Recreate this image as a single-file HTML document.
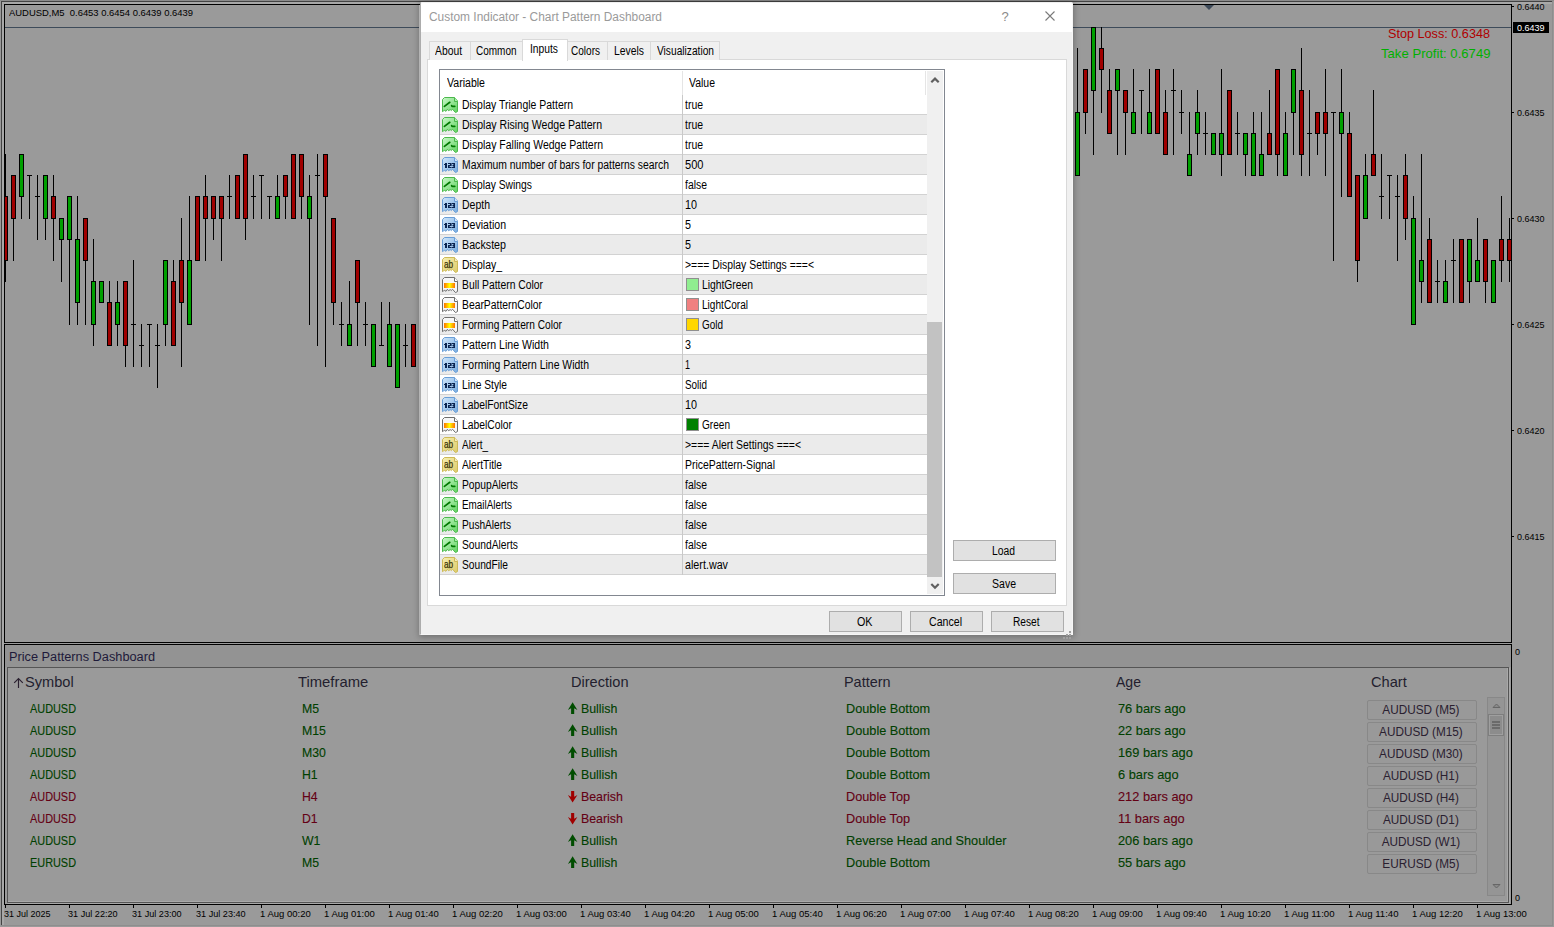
<!DOCTYPE html>
<html><head><meta charset="utf-8">
<style>
*{margin:0;padding:0;box-sizing:border-box}
html,body{width:1554px;height:927px;overflow:hidden;background:#9a9a9a;font-family:"Liberation Sans",sans-serif;position:relative}
.a{position:absolute}
.t{position:absolute;white-space:nowrap;transform-origin:0 0}
</style></head><body>
<svg width="0" height="0" style="position:absolute"><defs>
<linearGradient id="gg" x1="0" y1="0" x2="1" y2="1"><stop offset="0" stop-color="#c9f7c9"/><stop offset="1" stop-color="#5fd35f"/></linearGradient>
<linearGradient id="gb" x1="0" y1="0" x2="1" y2="1"><stop offset="0" stop-color="#cfe6fb"/><stop offset="1" stop-color="#78ace0"/></linearGradient>
<linearGradient id="gy" x1="0" y1="0" x2="1" y2="1"><stop offset="0" stop-color="#f7efb0"/><stop offset="1" stop-color="#dccb6a"/></linearGradient>
<linearGradient id="gc" x1="0" y1="0" x2="1" y2="0"><stop offset="0" stop-color="#ff7000"/><stop offset=".5" stop-color="#ffff00"/><stop offset="1" stop-color="#ff7000"/></linearGradient>
</defs></svg>
<!-- frame -->
<div class="a" style="left:0;top:0;width:1554px;height:1px;background:#8c8c8c"></div>
<div class="a" style="left:1px;top:1px;width:1551px;height:1px;background:#444"></div>
<div class="a" style="left:1px;top:1px;width:1px;height:924px;background:#444"></div>
<div class="a" style="left:2px;top:2px;width:1550px;height:2px;background:#a8a8a8"></div>
<div class="a" style="left:2px;top:2px;width:2px;height:923px;background:#a8a8a8"></div>
<div class="a" style="left:1552px;top:1px;width:1px;height:925px;background:#8e8e8e"></div>
<div class="a" style="left:1px;top:925px;width:1552px;height:1px;background:#8e8e8e"></div>
<!-- chart borders -->
<div class="a" style="left:4px;top:4px;width:1508px;height:639px;border:1px solid #000"></div>
<div class="a" style="left:4px;top:644px;width:1508px;height:261px;border:1px solid #000"></div>
<div class="a" style="left:5px;top:27px;width:1506px;height:1px;background:#3e4b5a"></div>
<svg class="a" style="left:1200px;top:4px" width="20" height="8" viewBox="0 0 20 8"><path d="M4,1 L14,1 L9,6 Z" fill="#3e4b5a"/></svg>
<div class="t" style="left:9px;top:6px;font-size:9.5px;line-height:13.5px;color:#000;transform:scaleX(0.9925);white-space:pre;">AUDUSD,M5  0.6453 0.6454 0.6439 0.6439</div>
<svg class="a" style="left:0;top:0" width="1554" height="927" viewBox="0 0 1554 927">
<defs><clipPath id="cc"><rect x="5" y="5" width="1506" height="637"/></clipPath></defs>
<g clip-path="url(#cc)">
<rect x="5" y="154" width="1" height="128" fill="#000"/>
<rect x="3" y="196" width="5" height="65" fill="#000"/>
<rect x="4" y="197" width="3" height="63" fill="#a00000"/>
<rect x="13" y="175" width="1" height="86" fill="#000"/>
<rect x="11" y="175" width="5" height="44" fill="#000"/>
<rect x="12" y="176" width="3" height="42" fill="#a00000"/>
<rect x="21" y="154" width="1" height="65" fill="#000"/>
<rect x="19" y="154" width="5" height="43" fill="#000"/>
<rect x="20" y="155" width="3" height="41" fill="#00a000"/>
<rect x="29" y="175" width="1" height="44" fill="#000"/>
<rect x="27" y="175" width="5" height="1" fill="#000"/>
<rect x="37" y="175" width="1" height="65" fill="#000"/>
<rect x="35" y="196" width="5" height="1" fill="#000"/>
<rect x="45" y="175" width="1" height="65" fill="#000"/>
<rect x="43" y="175" width="5" height="44" fill="#000"/>
<rect x="44" y="176" width="3" height="42" fill="#00a000"/>
<rect x="53" y="175" width="1" height="86" fill="#000"/>
<rect x="51" y="196" width="5" height="23" fill="#000"/>
<rect x="52" y="197" width="3" height="21" fill="#a00000"/>
<rect x="61" y="218" width="1" height="64" fill="#000"/>
<rect x="59" y="218" width="5" height="22" fill="#000"/>
<rect x="60" y="219" width="3" height="20" fill="#00a000"/>
<rect x="69" y="196" width="1" height="129" fill="#000"/>
<rect x="67" y="196" width="5" height="44" fill="#000"/>
<rect x="68" y="197" width="3" height="42" fill="#00a000"/>
<rect x="77" y="196" width="1" height="129" fill="#000"/>
<rect x="75" y="239" width="5" height="64" fill="#000"/>
<rect x="76" y="240" width="3" height="62" fill="#00a000"/>
<rect x="85" y="218" width="1" height="107" fill="#000"/>
<rect x="83" y="218" width="5" height="43" fill="#000"/>
<rect x="84" y="219" width="3" height="41" fill="#a00000"/>
<rect x="93" y="239" width="1" height="107" fill="#000"/>
<rect x="91" y="281" width="5" height="44" fill="#000"/>
<rect x="92" y="282" width="3" height="42" fill="#00a000"/>
<rect x="101" y="281" width="1" height="22" fill="#000"/>
<rect x="99" y="281" width="5" height="22" fill="#000"/>
<rect x="100" y="282" width="3" height="20" fill="#00a000"/>
<rect x="109" y="281" width="1" height="65" fill="#000"/>
<rect x="107" y="302" width="5" height="44" fill="#000"/>
<rect x="108" y="303" width="3" height="42" fill="#a00000"/>
<rect x="117" y="281" width="1" height="65" fill="#000"/>
<rect x="115" y="302" width="5" height="23" fill="#000"/>
<rect x="116" y="303" width="3" height="21" fill="#00a000"/>
<rect x="125" y="281" width="1" height="86" fill="#000"/>
<rect x="123" y="281" width="5" height="65" fill="#000"/>
<rect x="124" y="282" width="3" height="63" fill="#a00000"/>
<rect x="133" y="260" width="1" height="107" fill="#000"/>
<rect x="131" y="324" width="5" height="1" fill="#000"/>
<rect x="141" y="324" width="1" height="43" fill="#000"/>
<rect x="139" y="345" width="5" height="1" fill="#000"/>
<rect x="149" y="324" width="1" height="43" fill="#000"/>
<rect x="147" y="324" width="5" height="1" fill="#000"/>
<rect x="157" y="324" width="1" height="64" fill="#000"/>
<rect x="155" y="345" width="5" height="1" fill="#000"/>
<rect x="165" y="260" width="1" height="86" fill="#000"/>
<rect x="163" y="260" width="5" height="65" fill="#000"/>
<rect x="164" y="261" width="3" height="63" fill="#00a000"/>
<rect x="173" y="260" width="1" height="86" fill="#000"/>
<rect x="171" y="281" width="5" height="65" fill="#000"/>
<rect x="172" y="282" width="3" height="63" fill="#a00000"/>
<rect x="181" y="218" width="1" height="149" fill="#000"/>
<rect x="179" y="260" width="5" height="43" fill="#000"/>
<rect x="180" y="261" width="3" height="41" fill="#a00000"/>
<rect x="189" y="196" width="1" height="129" fill="#000"/>
<rect x="187" y="260" width="5" height="65" fill="#000"/>
<rect x="188" y="261" width="3" height="63" fill="#00a000"/>
<rect x="197" y="196" width="1" height="65" fill="#000"/>
<rect x="195" y="196" width="5" height="65" fill="#000"/>
<rect x="196" y="197" width="3" height="63" fill="#a00000"/>
<rect x="205" y="175" width="1" height="86" fill="#000"/>
<rect x="203" y="196" width="5" height="23" fill="#000"/>
<rect x="204" y="197" width="3" height="21" fill="#a00000"/>
<rect x="213" y="196" width="1" height="44" fill="#000"/>
<rect x="211" y="196" width="5" height="23" fill="#000"/>
<rect x="212" y="197" width="3" height="21" fill="#a00000"/>
<rect x="221" y="196" width="1" height="65" fill="#000"/>
<rect x="219" y="196" width="5" height="23" fill="#000"/>
<rect x="220" y="197" width="3" height="21" fill="#a00000"/>
<rect x="229" y="175" width="1" height="44" fill="#000"/>
<rect x="227" y="196" width="5" height="1" fill="#000"/>
<rect x="237" y="175" width="1" height="44" fill="#000"/>
<rect x="235" y="175" width="5" height="44" fill="#000"/>
<rect x="236" y="176" width="3" height="42" fill="#a00000"/>
<rect x="245" y="154" width="1" height="86" fill="#000"/>
<rect x="243" y="154" width="5" height="65" fill="#000"/>
<rect x="244" y="155" width="3" height="63" fill="#a00000"/>
<rect x="253" y="175" width="1" height="44" fill="#000"/>
<rect x="251" y="196" width="5" height="1" fill="#000"/>
<rect x="261" y="175" width="1" height="44" fill="#000"/>
<rect x="259" y="175" width="5" height="1" fill="#000"/>
<rect x="269" y="196" width="1" height="23" fill="#000"/>
<rect x="267" y="196" width="5" height="1" fill="#000"/>
<rect x="277" y="175" width="1" height="44" fill="#000"/>
<rect x="275" y="196" width="5" height="23" fill="#000"/>
<rect x="276" y="197" width="3" height="21" fill="#00a000"/>
<rect x="285" y="175" width="1" height="44" fill="#000"/>
<rect x="283" y="175" width="5" height="22" fill="#000"/>
<rect x="284" y="176" width="3" height="20" fill="#a00000"/>
<rect x="293" y="154" width="1" height="65" fill="#000"/>
<rect x="291" y="154" width="5" height="65" fill="#000"/>
<rect x="292" y="155" width="3" height="63" fill="#a00000"/>
<rect x="301" y="154" width="1" height="65" fill="#000"/>
<rect x="299" y="154" width="5" height="43" fill="#000"/>
<rect x="300" y="155" width="3" height="41" fill="#a00000"/>
<rect x="309" y="175" width="1" height="150" fill="#000"/>
<rect x="307" y="196" width="5" height="23" fill="#000"/>
<rect x="308" y="197" width="3" height="21" fill="#00a000"/>
<rect x="317" y="154" width="1" height="192" fill="#000"/>
<rect x="315" y="175" width="5" height="1" fill="#000"/>
<rect x="325" y="154" width="1" height="213" fill="#000"/>
<rect x="323" y="154" width="5" height="43" fill="#000"/>
<rect x="324" y="155" width="3" height="41" fill="#a00000"/>
<rect x="333" y="218" width="1" height="107" fill="#000"/>
<rect x="331" y="218" width="5" height="85" fill="#000"/>
<rect x="332" y="219" width="3" height="83" fill="#a00000"/>
<rect x="341" y="302" width="1" height="44" fill="#000"/>
<rect x="339" y="324" width="5" height="1" fill="#000"/>
<rect x="349" y="281" width="1" height="65" fill="#000"/>
<rect x="347" y="324" width="5" height="22" fill="#000"/>
<rect x="348" y="325" width="3" height="20" fill="#00a000"/>
<rect x="357" y="260" width="1" height="86" fill="#000"/>
<rect x="355" y="260" width="5" height="43" fill="#000"/>
<rect x="356" y="261" width="3" height="41" fill="#a00000"/>
<rect x="365" y="302" width="1" height="44" fill="#000"/>
<rect x="363" y="324" width="5" height="1" fill="#000"/>
<rect x="373" y="324" width="1" height="43" fill="#000"/>
<rect x="371" y="324" width="5" height="43" fill="#000"/>
<rect x="372" y="325" width="3" height="41" fill="#00a000"/>
<rect x="381" y="302" width="1" height="44" fill="#000"/>
<rect x="379" y="345" width="5" height="1" fill="#000"/>
<rect x="389" y="302" width="1" height="65" fill="#000"/>
<rect x="387" y="324" width="5" height="43" fill="#000"/>
<rect x="388" y="325" width="3" height="41" fill="#00a000"/>
<rect x="397" y="324" width="1" height="64" fill="#000"/>
<rect x="395" y="324" width="5" height="64" fill="#000"/>
<rect x="396" y="325" width="3" height="62" fill="#00a000"/>
<rect x="405" y="324" width="1" height="43" fill="#000"/>
<rect x="403" y="345" width="5" height="1" fill="#000"/>
<rect x="413" y="324" width="1" height="43" fill="#000"/>
<rect x="411" y="324" width="5" height="43" fill="#000"/>
<rect x="412" y="325" width="3" height="41" fill="#a00000"/>
<rect x="421" y="324" width="1" height="43" fill="#000"/>
<rect x="419" y="345" width="5" height="1" fill="#000"/>
<rect x="1077" y="48" width="1" height="128" fill="#000"/>
<rect x="1075" y="112" width="5" height="64" fill="#000"/>
<rect x="1076" y="113" width="3" height="62" fill="#00a000"/>
<rect x="1085" y="69" width="1" height="65" fill="#000"/>
<rect x="1083" y="69" width="5" height="44" fill="#000"/>
<rect x="1084" y="70" width="3" height="42" fill="#a00000"/>
<rect x="1093" y="27" width="1" height="128" fill="#000"/>
<rect x="1091" y="27" width="5" height="64" fill="#000"/>
<rect x="1092" y="28" width="3" height="62" fill="#00a000"/>
<rect x="1101" y="27" width="1" height="86" fill="#000"/>
<rect x="1099" y="48" width="5" height="22" fill="#000"/>
<rect x="1100" y="49" width="3" height="20" fill="#a00000"/>
<rect x="1109" y="69" width="1" height="65" fill="#000"/>
<rect x="1107" y="90" width="5" height="44" fill="#000"/>
<rect x="1108" y="91" width="3" height="42" fill="#a00000"/>
<rect x="1117" y="69" width="1" height="86" fill="#000"/>
<rect x="1115" y="69" width="5" height="22" fill="#000"/>
<rect x="1116" y="70" width="3" height="20" fill="#00a000"/>
<rect x="1125" y="90" width="1" height="65" fill="#000"/>
<rect x="1123" y="90" width="5" height="23" fill="#000"/>
<rect x="1124" y="91" width="3" height="21" fill="#a00000"/>
<rect x="1133" y="69" width="1" height="65" fill="#000"/>
<rect x="1131" y="112" width="5" height="22" fill="#000"/>
<rect x="1132" y="113" width="3" height="20" fill="#00a000"/>
<rect x="1141" y="90" width="1" height="44" fill="#000"/>
<rect x="1139" y="90" width="5" height="1" fill="#000"/>
<rect x="1149" y="69" width="1" height="65" fill="#000"/>
<rect x="1147" y="112" width="5" height="22" fill="#000"/>
<rect x="1148" y="113" width="3" height="20" fill="#00a000"/>
<rect x="1157" y="69" width="1" height="65" fill="#000"/>
<rect x="1155" y="69" width="5" height="65" fill="#000"/>
<rect x="1156" y="70" width="3" height="63" fill="#a00000"/>
<rect x="1165" y="90" width="1" height="65" fill="#000"/>
<rect x="1163" y="112" width="5" height="43" fill="#000"/>
<rect x="1164" y="113" width="3" height="41" fill="#a00000"/>
<rect x="1173" y="69" width="1" height="86" fill="#000"/>
<rect x="1171" y="90" width="5" height="1" fill="#000"/>
<rect x="1181" y="90" width="1" height="44" fill="#000"/>
<rect x="1179" y="112" width="5" height="1" fill="#000"/>
<rect x="1189" y="112" width="1" height="64" fill="#000"/>
<rect x="1187" y="154" width="5" height="22" fill="#000"/>
<rect x="1188" y="155" width="3" height="20" fill="#00a000"/>
<rect x="1197" y="90" width="1" height="65" fill="#000"/>
<rect x="1195" y="112" width="5" height="22" fill="#000"/>
<rect x="1196" y="113" width="3" height="20" fill="#00a000"/>
<rect x="1205" y="112" width="1" height="43" fill="#000"/>
<rect x="1203" y="133" width="5" height="1" fill="#000"/>
<rect x="1213" y="133" width="1" height="22" fill="#000"/>
<rect x="1211" y="133" width="5" height="22" fill="#000"/>
<rect x="1212" y="134" width="3" height="20" fill="#00a000"/>
<rect x="1221" y="69" width="1" height="107" fill="#000"/>
<rect x="1219" y="133" width="5" height="22" fill="#000"/>
<rect x="1220" y="134" width="3" height="20" fill="#00a000"/>
<rect x="1229" y="90" width="1" height="65" fill="#000"/>
<rect x="1227" y="90" width="5" height="65" fill="#000"/>
<rect x="1228" y="91" width="3" height="63" fill="#a00000"/>
<rect x="1237" y="112" width="1" height="43" fill="#000"/>
<rect x="1235" y="133" width="5" height="1" fill="#000"/>
<rect x="1245" y="133" width="1" height="43" fill="#000"/>
<rect x="1243" y="133" width="5" height="22" fill="#000"/>
<rect x="1244" y="134" width="3" height="20" fill="#00a000"/>
<rect x="1253" y="112" width="1" height="64" fill="#000"/>
<rect x="1251" y="133" width="5" height="43" fill="#000"/>
<rect x="1252" y="134" width="3" height="41" fill="#00a000"/>
<rect x="1261" y="112" width="1" height="64" fill="#000"/>
<rect x="1259" y="154" width="5" height="22" fill="#000"/>
<rect x="1260" y="155" width="3" height="20" fill="#00a000"/>
<rect x="1269" y="90" width="1" height="65" fill="#000"/>
<rect x="1267" y="133" width="5" height="22" fill="#000"/>
<rect x="1268" y="134" width="3" height="20" fill="#a00000"/>
<rect x="1277" y="69" width="1" height="107" fill="#000"/>
<rect x="1275" y="69" width="5" height="86" fill="#000"/>
<rect x="1276" y="70" width="3" height="84" fill="#a00000"/>
<rect x="1285" y="112" width="1" height="64" fill="#000"/>
<rect x="1283" y="133" width="5" height="43" fill="#000"/>
<rect x="1284" y="134" width="3" height="41" fill="#00a000"/>
<rect x="1293" y="69" width="1" height="86" fill="#000"/>
<rect x="1291" y="69" width="5" height="44" fill="#000"/>
<rect x="1292" y="70" width="3" height="42" fill="#00a000"/>
<rect x="1301" y="48" width="1" height="128" fill="#000"/>
<rect x="1299" y="90" width="5" height="65" fill="#000"/>
<rect x="1300" y="91" width="3" height="63" fill="#a00000"/>
<rect x="1309" y="90" width="1" height="86" fill="#000"/>
<rect x="1307" y="133" width="5" height="1" fill="#000"/>
<rect x="1317" y="112" width="1" height="43" fill="#000"/>
<rect x="1315" y="112" width="5" height="22" fill="#000"/>
<rect x="1316" y="113" width="3" height="20" fill="#a00000"/>
<rect x="1325" y="69" width="1" height="107" fill="#000"/>
<rect x="1323" y="112" width="5" height="22" fill="#000"/>
<rect x="1324" y="113" width="3" height="20" fill="#a00000"/>
<rect x="1333" y="112" width="1" height="149" fill="#000"/>
<rect x="1331" y="112" width="5" height="1" fill="#000"/>
<rect x="1341" y="69" width="1" height="128" fill="#000"/>
<rect x="1339" y="112" width="5" height="22" fill="#000"/>
<rect x="1340" y="113" width="3" height="20" fill="#00a000"/>
<rect x="1349" y="112" width="1" height="85" fill="#000"/>
<rect x="1347" y="133" width="5" height="64" fill="#000"/>
<rect x="1348" y="134" width="3" height="62" fill="#a00000"/>
<rect x="1357" y="175" width="1" height="107" fill="#000"/>
<rect x="1355" y="175" width="5" height="86" fill="#000"/>
<rect x="1356" y="176" width="3" height="84" fill="#a00000"/>
<rect x="1365" y="154" width="1" height="65" fill="#000"/>
<rect x="1363" y="175" width="5" height="44" fill="#000"/>
<rect x="1364" y="176" width="3" height="42" fill="#00a000"/>
<rect x="1373" y="90" width="1" height="86" fill="#000"/>
<rect x="1371" y="154" width="5" height="22" fill="#000"/>
<rect x="1372" y="155" width="3" height="20" fill="#a00000"/>
<rect x="1381" y="154" width="1" height="65" fill="#000"/>
<rect x="1379" y="196" width="5" height="1" fill="#000"/>
<rect x="1389" y="175" width="1" height="44" fill="#000"/>
<rect x="1387" y="175" width="5" height="1" fill="#000"/>
<rect x="1397" y="175" width="1" height="86" fill="#000"/>
<rect x="1395" y="196" width="5" height="1" fill="#000"/>
<rect x="1405" y="154" width="1" height="86" fill="#000"/>
<rect x="1403" y="175" width="5" height="44" fill="#000"/>
<rect x="1404" y="176" width="3" height="42" fill="#a00000"/>
<rect x="1413" y="196" width="1" height="129" fill="#000"/>
<rect x="1411" y="218" width="5" height="107" fill="#000"/>
<rect x="1412" y="219" width="3" height="105" fill="#00a000"/>
<rect x="1421" y="154" width="1" height="149" fill="#000"/>
<rect x="1419" y="260" width="5" height="22" fill="#000"/>
<rect x="1420" y="261" width="3" height="20" fill="#00a000"/>
<rect x="1429" y="218" width="1" height="85" fill="#000"/>
<rect x="1427" y="239" width="5" height="64" fill="#000"/>
<rect x="1428" y="240" width="3" height="62" fill="#a00000"/>
<rect x="1437" y="260" width="1" height="43" fill="#000"/>
<rect x="1435" y="281" width="5" height="1" fill="#000"/>
<rect x="1445" y="260" width="1" height="43" fill="#000"/>
<rect x="1443" y="281" width="5" height="22" fill="#000"/>
<rect x="1444" y="282" width="3" height="20" fill="#00a000"/>
<rect x="1453" y="239" width="1" height="64" fill="#000"/>
<rect x="1451" y="260" width="5" height="1" fill="#000"/>
<rect x="1461" y="239" width="1" height="64" fill="#000"/>
<rect x="1459" y="239" width="5" height="64" fill="#000"/>
<rect x="1460" y="240" width="3" height="62" fill="#a00000"/>
<rect x="1469" y="239" width="1" height="64" fill="#000"/>
<rect x="1467" y="239" width="5" height="43" fill="#000"/>
<rect x="1468" y="240" width="3" height="41" fill="#00a000"/>
<rect x="1477" y="218" width="1" height="64" fill="#000"/>
<rect x="1475" y="260" width="5" height="22" fill="#000"/>
<rect x="1476" y="261" width="3" height="20" fill="#00a000"/>
<rect x="1485" y="239" width="1" height="64" fill="#000"/>
<rect x="1483" y="239" width="5" height="43" fill="#000"/>
<rect x="1484" y="240" width="3" height="41" fill="#a00000"/>
<rect x="1493" y="260" width="1" height="43" fill="#000"/>
<rect x="1491" y="260" width="5" height="43" fill="#000"/>
<rect x="1492" y="261" width="3" height="41" fill="#00a000"/>
<rect x="1501" y="196" width="1" height="86" fill="#000"/>
<rect x="1499" y="239" width="5" height="22" fill="#000"/>
<rect x="1500" y="240" width="3" height="20" fill="#a00000"/>
<rect x="1509" y="218" width="1" height="64" fill="#000"/>
<rect x="1507" y="239" width="5" height="22" fill="#000"/>
<rect x="1508" y="240" width="3" height="20" fill="#a00000"/>
</g>
</svg>
<div class="a" style="left:1512px;top:6px;width:2px;height:1px;background:#000"></div><div class="t" style="left:1517px;top:0px;font-size:9.5px;line-height:13.5px;color:#000;transform:scaleX(0.9462);">0.6440</div><div class="a" style="left:1512px;top:112px;width:2px;height:1px;background:#000"></div><div class="t" style="left:1517px;top:106px;font-size:9.5px;line-height:13.5px;color:#000;transform:scaleX(0.9462);">0.6435</div><div class="a" style="left:1512px;top:218px;width:2px;height:1px;background:#000"></div><div class="t" style="left:1517px;top:212px;font-size:9.5px;line-height:13.5px;color:#000;transform:scaleX(0.9462);">0.6430</div><div class="a" style="left:1512px;top:324px;width:2px;height:1px;background:#000"></div><div class="t" style="left:1517px;top:318px;font-size:9.5px;line-height:13.5px;color:#000;transform:scaleX(0.9462);">0.6425</div><div class="a" style="left:1512px;top:430px;width:2px;height:1px;background:#000"></div><div class="t" style="left:1517px;top:424px;font-size:9.5px;line-height:13.5px;color:#000;transform:scaleX(0.9462);">0.6420</div><div class="a" style="left:1512px;top:536px;width:2px;height:1px;background:#000"></div><div class="t" style="left:1517px;top:530px;font-size:9.5px;line-height:13.5px;color:#000;transform:scaleX(0.9462);">0.6415</div>
<div class="a" style="left:1513px;top:22px;width:36px;height:11px;background:#000"></div>
<div class="t" style="left:1517px;top:21px;font-size:9.5px;line-height:13.5px;color:#fff;transform:scaleX(0.9462);">0.6439</div>
<div class="t" style="left:1388px;top:25px;font-size:13px;line-height:17px;color:#b00000;transform:scaleX(0.9732);">Stop Loss: 0.6348</div>
<div class="t" style="left:1381px;top:45px;font-size:13px;line-height:17px;color:#00b000;transform:scaleX(1.0101);">Take Profit: 0.6749</div>
<div class="t" style="left:1515px;top:646px;font-size:9px;line-height:13px;color:#000;">0</div>
<div class="t" style="left:1515px;top:892px;font-size:9px;line-height:13px;color:#000;">0</div>
<div class="a" style="left:5px;top:905px;width:1px;height:3px;background:#000"></div><div class="t" style="left:4px;top:907px;font-size:9.5px;line-height:13.5px;color:#000;transform:scaleX(0.9445);">31 Jul 2025</div><div class="a" style="left:69px;top:905px;width:1px;height:3px;background:#000"></div><div class="t" style="left:68px;top:907px;font-size:9.5px;line-height:13.5px;color:#000;transform:scaleX(0.9582);">31 Jul 22:20</div><div class="a" style="left:133px;top:905px;width:1px;height:3px;background:#000"></div><div class="t" style="left:132px;top:907px;font-size:9.5px;line-height:13.5px;color:#000;transform:scaleX(0.9582);">31 Jul 23:00</div><div class="a" style="left:197px;top:905px;width:1px;height:3px;background:#000"></div><div class="t" style="left:196px;top:907px;font-size:9.5px;line-height:13.5px;color:#000;transform:scaleX(0.9582);">31 Jul 23:40</div><div class="a" style="left:261px;top:905px;width:1px;height:3px;background:#000"></div><div class="t" style="left:260px;top:907px;font-size:9.5px;line-height:13.5px;color:#000;">1 Aug 00:20</div><div class="a" style="left:325px;top:905px;width:1px;height:3px;background:#000"></div><div class="t" style="left:324px;top:907px;font-size:9.5px;line-height:13.5px;color:#000;">1 Aug 01:00</div><div class="a" style="left:389px;top:905px;width:1px;height:3px;background:#000"></div><div class="t" style="left:388px;top:907px;font-size:9.5px;line-height:13.5px;color:#000;">1 Aug 01:40</div><div class="a" style="left:453px;top:905px;width:1px;height:3px;background:#000"></div><div class="t" style="left:452px;top:907px;font-size:9.5px;line-height:13.5px;color:#000;">1 Aug 02:20</div><div class="a" style="left:517px;top:905px;width:1px;height:3px;background:#000"></div><div class="t" style="left:516px;top:907px;font-size:9.5px;line-height:13.5px;color:#000;">1 Aug 03:00</div><div class="a" style="left:581px;top:905px;width:1px;height:3px;background:#000"></div><div class="t" style="left:580px;top:907px;font-size:9.5px;line-height:13.5px;color:#000;">1 Aug 03:40</div><div class="a" style="left:645px;top:905px;width:1px;height:3px;background:#000"></div><div class="t" style="left:644px;top:907px;font-size:9.5px;line-height:13.5px;color:#000;">1 Aug 04:20</div><div class="a" style="left:709px;top:905px;width:1px;height:3px;background:#000"></div><div class="t" style="left:708px;top:907px;font-size:9.5px;line-height:13.5px;color:#000;">1 Aug 05:00</div><div class="a" style="left:773px;top:905px;width:1px;height:3px;background:#000"></div><div class="t" style="left:772px;top:907px;font-size:9.5px;line-height:13.5px;color:#000;">1 Aug 05:40</div><div class="a" style="left:837px;top:905px;width:1px;height:3px;background:#000"></div><div class="t" style="left:836px;top:907px;font-size:9.5px;line-height:13.5px;color:#000;">1 Aug 06:20</div><div class="a" style="left:901px;top:905px;width:1px;height:3px;background:#000"></div><div class="t" style="left:900px;top:907px;font-size:9.5px;line-height:13.5px;color:#000;">1 Aug 07:00</div><div class="a" style="left:965px;top:905px;width:1px;height:3px;background:#000"></div><div class="t" style="left:964px;top:907px;font-size:9.5px;line-height:13.5px;color:#000;">1 Aug 07:40</div><div class="a" style="left:1029px;top:905px;width:1px;height:3px;background:#000"></div><div class="t" style="left:1028px;top:907px;font-size:9.5px;line-height:13.5px;color:#000;">1 Aug 08:20</div><div class="a" style="left:1093px;top:905px;width:1px;height:3px;background:#000"></div><div class="t" style="left:1092px;top:907px;font-size:9.5px;line-height:13.5px;color:#000;">1 Aug 09:00</div><div class="a" style="left:1157px;top:905px;width:1px;height:3px;background:#000"></div><div class="t" style="left:1156px;top:907px;font-size:9.5px;line-height:13.5px;color:#000;">1 Aug 09:40</div><div class="a" style="left:1221px;top:905px;width:1px;height:3px;background:#000"></div><div class="t" style="left:1220px;top:907px;font-size:9.5px;line-height:13.5px;color:#000;">1 Aug 10:20</div><div class="a" style="left:1285px;top:905px;width:1px;height:3px;background:#000"></div><div class="t" style="left:1284px;top:907px;font-size:9.5px;line-height:13.5px;color:#000;transform:scaleX(1.0097);">1 Aug 11:00</div><div class="a" style="left:1349px;top:905px;width:1px;height:3px;background:#000"></div><div class="t" style="left:1348px;top:907px;font-size:9.5px;line-height:13.5px;color:#000;transform:scaleX(1.0097);">1 Aug 11:40</div><div class="a" style="left:1413px;top:905px;width:1px;height:3px;background:#000"></div><div class="t" style="left:1412px;top:907px;font-size:9.5px;line-height:13.5px;color:#000;">1 Aug 12:20</div><div class="a" style="left:1477px;top:905px;width:1px;height:3px;background:#000"></div><div class="t" style="left:1476px;top:907px;font-size:9.5px;line-height:13.5px;color:#000;">1 Aug 13:00</div>

<div class="a" style="left:5px;top:645px;width:1506px;height:22px;background:#939393"></div>
<div class="t" style="left:9px;top:649px;font-size:12px;line-height:16px;color:#1e1a3a;transform:scaleX(1.0625);">Price Patterns Dashboard</div>
<div class="a" style="left:7px;top:667px;width:1502px;height:236px;border:1px solid #555555;box-shadow:inset -1px -1px 0 #a9a9a9, 1px 1px 0 #a9a9a9"></div>
<svg class="a" style="left:12px;top:676px" width="13" height="13" viewBox="0 0 13 13"><path d="M6.5,2.6 L6.5,12 M2.2,6.9 L6.5,2.6 L10.8,6.9" stroke="#2a2030" stroke-width="1.15" fill="none"/></svg>
<div class="t" style="left:25px;top:672px;font-size:15px;line-height:19px;color:#231e2e;transform:scaleX(0.9734);">Symbol</div>
<div class="t" style="left:298px;top:672px;font-size:15px;line-height:19px;color:#231e2e;transform:scaleX(0.9870);">Timeframe</div>
<div class="t" style="left:571px;top:672px;font-size:15px;line-height:19px;color:#231e2e;transform:scaleX(0.9715);">Direction</div>
<div class="t" style="left:844px;top:672px;font-size:15px;line-height:19px;color:#231e2e;transform:scaleX(0.9612);">Pattern</div>
<div class="t" style="left:1116px;top:672px;font-size:15px;line-height:19px;color:#231e2e;transform:scaleX(0.9362);">Age</div>
<div class="t" style="left:1371px;top:672px;font-size:15px;line-height:19px;color:#231e2e;transform:scaleX(0.9758);">Chart</div>
<div class="t" style="left:30px;top:700px;font-size:13px;line-height:17px;color:#004000;transform:scaleX(0.8380);-webkit-text-stroke:0.12px #004000;">AUDUSD</div><div class="t" style="left:302px;top:700px;font-size:13px;line-height:17px;color:#004000;transform:scaleX(0.9450);-webkit-text-stroke:0.12px #004000;">M5</div><svg class="a" style="left:567px;top:702px" width="12" height="13" viewBox="0 0 12 13"><path d="M5.6,0.3 L10.4,7.9 L7.2,6.3 L7.2,12 L4.1,12 L4.1,6.3 L0.9,7.9 Z" fill="#004d00"/></svg><div class="t" style="left:581px;top:700px;font-size:13px;line-height:17px;color:#004000;transform:scaleX(0.9500);-webkit-text-stroke:0.12px #004000;">Bullish</div><div class="t" style="left:846px;top:700px;font-size:13px;line-height:17px;color:#004000;transform:scaleX(0.9780);-webkit-text-stroke:0.12px #004000;">Double Bottom</div><div class="t" style="left:1118px;top:700px;font-size:13px;line-height:17px;color:#004000;transform:scaleX(0.9850);-webkit-text-stroke:0.12px #004000;">76 bars ago</div><div class="a" style="left:1367px;top:700px;width:110px;height:20px;background:#999999;border:1px solid #888888;border-radius:2px"></div><div class="t" style="left:1367px;top:702px;width:110px;text-align:center;font-size:12px;line-height:16px;color:#2a2030;transform:scaleX(0.98)">AUDUSD (M5)</div><div class="t" style="left:30px;top:722px;font-size:13px;line-height:17px;color:#004000;transform:scaleX(0.8380);-webkit-text-stroke:0.12px #004000;">AUDUSD</div><div class="t" style="left:302px;top:722px;font-size:13px;line-height:17px;color:#004000;transform:scaleX(0.9450);-webkit-text-stroke:0.12px #004000;">M15</div><svg class="a" style="left:567px;top:724px" width="12" height="13" viewBox="0 0 12 13"><path d="M5.6,0.3 L10.4,7.9 L7.2,6.3 L7.2,12 L4.1,12 L4.1,6.3 L0.9,7.9 Z" fill="#004d00"/></svg><div class="t" style="left:581px;top:722px;font-size:13px;line-height:17px;color:#004000;transform:scaleX(0.9500);-webkit-text-stroke:0.12px #004000;">Bullish</div><div class="t" style="left:846px;top:722px;font-size:13px;line-height:17px;color:#004000;transform:scaleX(0.9780);-webkit-text-stroke:0.12px #004000;">Double Bottom</div><div class="t" style="left:1118px;top:722px;font-size:13px;line-height:17px;color:#004000;transform:scaleX(0.9850);-webkit-text-stroke:0.12px #004000;">22 bars ago</div><div class="a" style="left:1367px;top:722px;width:110px;height:20px;background:#999999;border:1px solid #888888;border-radius:2px"></div><div class="t" style="left:1367px;top:724px;width:110px;text-align:center;font-size:12px;line-height:16px;color:#2a2030;transform:scaleX(0.98)">AUDUSD (M15)</div><div class="t" style="left:30px;top:744px;font-size:13px;line-height:17px;color:#004000;transform:scaleX(0.8380);-webkit-text-stroke:0.12px #004000;">AUDUSD</div><div class="t" style="left:302px;top:744px;font-size:13px;line-height:17px;color:#004000;transform:scaleX(0.9450);-webkit-text-stroke:0.12px #004000;">M30</div><svg class="a" style="left:567px;top:746px" width="12" height="13" viewBox="0 0 12 13"><path d="M5.6,0.3 L10.4,7.9 L7.2,6.3 L7.2,12 L4.1,12 L4.1,6.3 L0.9,7.9 Z" fill="#004d00"/></svg><div class="t" style="left:581px;top:744px;font-size:13px;line-height:17px;color:#004000;transform:scaleX(0.9500);-webkit-text-stroke:0.12px #004000;">Bullish</div><div class="t" style="left:846px;top:744px;font-size:13px;line-height:17px;color:#004000;transform:scaleX(0.9780);-webkit-text-stroke:0.12px #004000;">Double Bottom</div><div class="t" style="left:1118px;top:744px;font-size:13px;line-height:17px;color:#004000;transform:scaleX(0.9850);-webkit-text-stroke:0.12px #004000;">169 bars ago</div><div class="a" style="left:1367px;top:744px;width:110px;height:20px;background:#999999;border:1px solid #888888;border-radius:2px"></div><div class="t" style="left:1367px;top:746px;width:110px;text-align:center;font-size:12px;line-height:16px;color:#2a2030;transform:scaleX(0.98)">AUDUSD (M30)</div><div class="t" style="left:30px;top:766px;font-size:13px;line-height:17px;color:#004000;transform:scaleX(0.8380);-webkit-text-stroke:0.12px #004000;">AUDUSD</div><div class="t" style="left:302px;top:766px;font-size:13px;line-height:17px;color:#004000;transform:scaleX(0.9450);-webkit-text-stroke:0.12px #004000;">H1</div><svg class="a" style="left:567px;top:768px" width="12" height="13" viewBox="0 0 12 13"><path d="M5.6,0.3 L10.4,7.9 L7.2,6.3 L7.2,12 L4.1,12 L4.1,6.3 L0.9,7.9 Z" fill="#004d00"/></svg><div class="t" style="left:581px;top:766px;font-size:13px;line-height:17px;color:#004000;transform:scaleX(0.9500);-webkit-text-stroke:0.12px #004000;">Bullish</div><div class="t" style="left:846px;top:766px;font-size:13px;line-height:17px;color:#004000;transform:scaleX(0.9780);-webkit-text-stroke:0.12px #004000;">Double Bottom</div><div class="t" style="left:1118px;top:766px;font-size:13px;line-height:17px;color:#004000;transform:scaleX(0.9850);-webkit-text-stroke:0.12px #004000;">6 bars ago</div><div class="a" style="left:1367px;top:766px;width:110px;height:20px;background:#999999;border:1px solid #888888;border-radius:2px"></div><div class="t" style="left:1367px;top:768px;width:110px;text-align:center;font-size:12px;line-height:16px;color:#2a2030;transform:scaleX(0.98)">AUDUSD (H1)</div><div class="t" style="left:30px;top:788px;font-size:13px;line-height:17px;color:#640014;transform:scaleX(0.8380);-webkit-text-stroke:0.12px #640014;">AUDUSD</div><div class="t" style="left:302px;top:788px;font-size:13px;line-height:17px;color:#640014;transform:scaleX(0.9450);-webkit-text-stroke:0.12px #640014;">H4</div><svg class="a" style="left:567px;top:790px" width="12" height="13" viewBox="0 0 12 13"><path d="M4.1,1 L7.2,1 L7.2,6.8 L10.4,4.9 L5.6,12.4 L0.9,4.9 L4.1,6.8 Z" fill="#a00000"/></svg><div class="t" style="left:581px;top:788px;font-size:13px;line-height:17px;color:#640014;transform:scaleX(0.9500);-webkit-text-stroke:0.12px #640014;">Bearish</div><div class="t" style="left:846px;top:788px;font-size:13px;line-height:17px;color:#640014;transform:scaleX(0.9780);-webkit-text-stroke:0.12px #640014;">Double Top</div><div class="t" style="left:1118px;top:788px;font-size:13px;line-height:17px;color:#640014;transform:scaleX(0.9850);-webkit-text-stroke:0.12px #640014;">212 bars ago</div><div class="a" style="left:1367px;top:788px;width:110px;height:20px;background:#999999;border:1px solid #888888;border-radius:2px"></div><div class="t" style="left:1367px;top:790px;width:110px;text-align:center;font-size:12px;line-height:16px;color:#2a2030;transform:scaleX(0.98)">AUDUSD (H4)</div><div class="t" style="left:30px;top:810px;font-size:13px;line-height:17px;color:#640014;transform:scaleX(0.8380);-webkit-text-stroke:0.12px #640014;">AUDUSD</div><div class="t" style="left:302px;top:810px;font-size:13px;line-height:17px;color:#640014;transform:scaleX(0.9450);-webkit-text-stroke:0.12px #640014;">D1</div><svg class="a" style="left:567px;top:812px" width="12" height="13" viewBox="0 0 12 13"><path d="M4.1,1 L7.2,1 L7.2,6.8 L10.4,4.9 L5.6,12.4 L0.9,4.9 L4.1,6.8 Z" fill="#a00000"/></svg><div class="t" style="left:581px;top:810px;font-size:13px;line-height:17px;color:#640014;transform:scaleX(0.9500);-webkit-text-stroke:0.12px #640014;">Bearish</div><div class="t" style="left:846px;top:810px;font-size:13px;line-height:17px;color:#640014;transform:scaleX(0.9780);-webkit-text-stroke:0.12px #640014;">Double Top</div><div class="t" style="left:1118px;top:810px;font-size:13px;line-height:17px;color:#640014;transform:scaleX(0.9850);-webkit-text-stroke:0.12px #640014;">11 bars ago</div><div class="a" style="left:1367px;top:810px;width:110px;height:20px;background:#999999;border:1px solid #888888;border-radius:2px"></div><div class="t" style="left:1367px;top:812px;width:110px;text-align:center;font-size:12px;line-height:16px;color:#2a2030;transform:scaleX(0.98)">AUDUSD (D1)</div><div class="t" style="left:30px;top:832px;font-size:13px;line-height:17px;color:#004000;transform:scaleX(0.8380);-webkit-text-stroke:0.12px #004000;">AUDUSD</div><div class="t" style="left:302px;top:832px;font-size:13px;line-height:17px;color:#004000;transform:scaleX(0.9450);-webkit-text-stroke:0.12px #004000;">W1</div><svg class="a" style="left:567px;top:834px" width="12" height="13" viewBox="0 0 12 13"><path d="M5.6,0.3 L10.4,7.9 L7.2,6.3 L7.2,12 L4.1,12 L4.1,6.3 L0.9,7.9 Z" fill="#004d00"/></svg><div class="t" style="left:581px;top:832px;font-size:13px;line-height:17px;color:#004000;transform:scaleX(0.9500);-webkit-text-stroke:0.12px #004000;">Bullish</div><div class="t" style="left:846px;top:832px;font-size:13px;line-height:17px;color:#004000;transform:scaleX(0.9780);-webkit-text-stroke:0.12px #004000;">Reverse Head and Shoulder</div><div class="t" style="left:1118px;top:832px;font-size:13px;line-height:17px;color:#004000;transform:scaleX(0.9850);-webkit-text-stroke:0.12px #004000;">206 bars ago</div><div class="a" style="left:1367px;top:832px;width:110px;height:20px;background:#999999;border:1px solid #888888;border-radius:2px"></div><div class="t" style="left:1367px;top:834px;width:110px;text-align:center;font-size:12px;line-height:16px;color:#2a2030;transform:scaleX(0.98)">AUDUSD (W1)</div><div class="t" style="left:30px;top:854px;font-size:13px;line-height:17px;color:#004000;transform:scaleX(0.8380);-webkit-text-stroke:0.12px #004000;">EURUSD</div><div class="t" style="left:302px;top:854px;font-size:13px;line-height:17px;color:#004000;transform:scaleX(0.9450);-webkit-text-stroke:0.12px #004000;">M5</div><svg class="a" style="left:567px;top:856px" width="12" height="13" viewBox="0 0 12 13"><path d="M5.6,0.3 L10.4,7.9 L7.2,6.3 L7.2,12 L4.1,12 L4.1,6.3 L0.9,7.9 Z" fill="#004d00"/></svg><div class="t" style="left:581px;top:854px;font-size:13px;line-height:17px;color:#004000;transform:scaleX(0.9500);-webkit-text-stroke:0.12px #004000;">Bullish</div><div class="t" style="left:846px;top:854px;font-size:13px;line-height:17px;color:#004000;transform:scaleX(0.9780);-webkit-text-stroke:0.12px #004000;">Double Bottom</div><div class="t" style="left:1118px;top:854px;font-size:13px;line-height:17px;color:#004000;transform:scaleX(0.9850);-webkit-text-stroke:0.12px #004000;">55 bars ago</div><div class="a" style="left:1367px;top:854px;width:110px;height:20px;background:#999999;border:1px solid #888888;border-radius:2px"></div><div class="t" style="left:1367px;top:856px;width:110px;text-align:center;font-size:12px;line-height:16px;color:#2a2030;transform:scaleX(0.98)">EURUSD (M5)</div>
<div class="a" style="left:1487px;top:697px;width:18px;height:199px;background:#959595;border:1px solid #888888"></div>
<div class="a" style="left:1488px;top:714px;width:16px;height:22px;background:#8c8c8c;border:1px solid #7e7e7e;box-shadow:inset 1px 1px 0 #9f9f9f, inset -1px -1px 0 #9f9f9f"></div>
<svg class="a" style="left:1487px;top:697px" width="18" height="199" viewBox="0 0 18 199">
<path d="M6,10.5 L9.5,7 L13,10.5 Z" fill="#8a8a8a" stroke="#666" stroke-width="1"/>
<path d="M6,187.5 L9.5,191 L13,187.5 Z" fill="#8a8a8a" stroke="#666" stroke-width="1"/>
<rect x="5" y="24" width="8" height="2" fill="#6a6a6a"/><rect x="5" y="27" width="8" height="2" fill="#6a6a6a"/><rect x="5" y="30" width="8" height="2" fill="#6a6a6a"/>
</svg>


<div class="a" style="left:420px;top:2px;width:653px;height:633px;box-shadow:0 1px 6px 1px rgba(0,0,0,.28);border-radius:2px 2px 0 0"></div>
<div class="a" style="left:420px;top:2px;width:653px;height:633px;background:#f0f0f0;border:1px solid #f6f6f6;border-left-color:#acacac;border-top-color:#f0f0f0;border-radius:2px 2px 0 0;overflow:hidden">
  <div class="a" style="left:0;top:0;width:652px;height:29px;background:#fff"></div>
</div>
<div class="a" style="left:419px;top:5px;width:1px;height:630px;background:#b4b4b4"></div>
<div class="t" style="left:429px;top:9px;font-size:12px;line-height:16px;color:#9a9a9a;transform:scaleX(0.9924);">Custom Indicator - Chart Pattern Dashboard</div>
<svg class="a" style="left:1000px;top:9px" width="60" height="16" viewBox="0 0 60 16">
<text x="5" y="12" font-family="Liberation Sans" font-size="13" fill="#8a8a8a" text-anchor="middle">?</text>
<path d="M45.5,2.5 L54.5,11.5 M54.5,2.5 L45.5,11.5" stroke="#7a7a7a" stroke-width="1.1"/>
</svg>
<div class="a" style="left:427px;top:59px;width:640px;height:547px;background:#fff;border:1px solid #d9d9d9"></div>
<div class="a" style="left:429px;top:41px;width:42px;height:19px;background:#f0f0f0;border:1px solid #d9d9d9;border-bottom:none"></div><div class="t" style="left:435px;top:43px;font-size:12px;line-height:16px;color:#000;transform:scaleX(0.8610);">About</div><div class="a" style="left:470px;top:41px;width:54px;height:19px;background:#f0f0f0;border:1px solid #d9d9d9;border-bottom:none"></div><div class="t" style="left:476px;top:43px;font-size:12px;line-height:16px;color:#000;transform:scaleX(0.8318);">Common</div><div class="a" style="left:567px;top:41px;width:41px;height:19px;background:#f0f0f0;border:1px solid #d9d9d9;border-bottom:none"></div><div class="t" style="left:571px;top:43px;font-size:12px;line-height:16px;color:#000;transform:scaleX(0.8360);">Colors</div><div class="a" style="left:607px;top:41px;width:44px;height:19px;background:#f0f0f0;border:1px solid #d9d9d9;border-bottom:none"></div><div class="t" style="left:614px;top:43px;font-size:12px;line-height:16px;color:#000;transform:scaleX(0.8649);">Levels</div><div class="a" style="left:650px;top:41px;width:70px;height:19px;background:#f0f0f0;border:1px solid #d9d9d9;border-bottom:none"></div><div class="t" style="left:657px;top:43px;font-size:12px;line-height:16px;color:#000;transform:scaleX(0.8488);">Visualization</div><div class="a" style="left:522px;top:39px;width:46px;height:22px;background:#fff;border:1px solid #d9d9d9;border-bottom:none"></div><div class="t" style="left:530px;top:41px;font-size:12px;line-height:16px;color:#000;transform:scaleX(0.8562);">Inputs</div>
<div class="a" style="left:439px;top:69px;width:506px;height:527px;background:#fff;border:1px solid #828790"></div>
<div class="a" style="left:682px;top:71px;width:1px;height:24px;background:#e5e5e5"></div>
<div class="a" style="left:925px;top:71px;width:1px;height:24px;background:#e5e5e5"></div>
<div class="t" style="left:447px;top:75px;font-size:12px;line-height:16px;color:#000;transform:scaleX(0.8808);">Variable</div>
<div class="t" style="left:689px;top:75px;font-size:12px;line-height:16px;color:#000;transform:scaleX(0.8721);">Value</div>
<div class="a" style="left:440px;top:114px;width:487px;height:1px;background:#d2d2d2"></div><svg class="a" style="left:442px;top:97px" width="16" height="17" viewBox="0 0 16 17"><path d="M0.5,14.6 L0.5,2.5 L2.5,0.5 L12.5,0.5 L15.5,3.5 L15.5,14.5 L13.5,15.6 L10.6,12.3 L9.2,13.5 L8.3,12.7 L6.4,13.7 L5.4,12.3 L3.7,14.4 L2.6,12.9 L1,14.6 Z" fill="url(#gg)" stroke="#4cb84c"/><path d="M12.5,0.5 L15.5,3.5 L15.5,4.5 L12.5,4.5 Z" fill="#a8eca8"/><path d="M12.5,0.5 L12.5,4.5 L15.5,4.5" fill="none" stroke="#4cb84c"/><path d="M2.4,9.4 L7.8,5.3" stroke="#007800" stroke-width="1.7" stroke-linecap="round"/><path d="M9.6,8.6 Q9.9,9.4 10.6,9.4 L12.8,9.4" stroke="#007800" stroke-width="1.6" fill="none" stroke-linecap="round"/></svg><div class="t" style="left:462px;top:97px;font-size:12px;line-height:16px;color:#000;transform:scaleX(0.8712);">Display Triangle Pattern</div><div class="t" style="left:685px;top:97px;font-size:12px;line-height:16px;color:#000;transform:scaleX(0.8701);">true</div><div class="a" style="left:440px;top:115px;width:487px;height:19px;background:#ebebeb"></div><div class="a" style="left:440px;top:134px;width:487px;height:1px;background:#d2d2d2"></div><svg class="a" style="left:442px;top:117px" width="16" height="17" viewBox="0 0 16 17"><path d="M0.5,14.6 L0.5,2.5 L2.5,0.5 L12.5,0.5 L15.5,3.5 L15.5,14.5 L13.5,15.6 L10.6,12.3 L9.2,13.5 L8.3,12.7 L6.4,13.7 L5.4,12.3 L3.7,14.4 L2.6,12.9 L1,14.6 Z" fill="url(#gg)" stroke="#4cb84c"/><path d="M12.5,0.5 L15.5,3.5 L15.5,4.5 L12.5,4.5 Z" fill="#a8eca8"/><path d="M12.5,0.5 L12.5,4.5 L15.5,4.5" fill="none" stroke="#4cb84c"/><path d="M2.4,9.4 L7.8,5.3" stroke="#007800" stroke-width="1.7" stroke-linecap="round"/><path d="M9.6,8.6 Q9.9,9.4 10.6,9.4 L12.8,9.4" stroke="#007800" stroke-width="1.6" fill="none" stroke-linecap="round"/></svg><div class="t" style="left:462px;top:117px;font-size:12px;line-height:16px;color:#000;transform:scaleX(0.8795);">Display Rising Wedge Pattern</div><div class="t" style="left:685px;top:117px;font-size:12px;line-height:16px;color:#000;transform:scaleX(0.8701);">true</div><div class="a" style="left:440px;top:154px;width:487px;height:1px;background:#d2d2d2"></div><svg class="a" style="left:442px;top:137px" width="16" height="17" viewBox="0 0 16 17"><path d="M0.5,14.6 L0.5,2.5 L2.5,0.5 L12.5,0.5 L15.5,3.5 L15.5,14.5 L13.5,15.6 L10.6,12.3 L9.2,13.5 L8.3,12.7 L6.4,13.7 L5.4,12.3 L3.7,14.4 L2.6,12.9 L1,14.6 Z" fill="url(#gg)" stroke="#4cb84c"/><path d="M12.5,0.5 L15.5,3.5 L15.5,4.5 L12.5,4.5 Z" fill="#a8eca8"/><path d="M12.5,0.5 L12.5,4.5 L15.5,4.5" fill="none" stroke="#4cb84c"/><path d="M2.4,9.4 L7.8,5.3" stroke="#007800" stroke-width="1.7" stroke-linecap="round"/><path d="M9.6,8.6 Q9.9,9.4 10.6,9.4 L12.8,9.4" stroke="#007800" stroke-width="1.6" fill="none" stroke-linecap="round"/></svg><div class="t" style="left:462px;top:137px;font-size:12px;line-height:16px;color:#000;transform:scaleX(0.8747);">Display Falling Wedge Pattern</div><div class="t" style="left:685px;top:137px;font-size:12px;line-height:16px;color:#000;transform:scaleX(0.8701);">true</div><div class="a" style="left:440px;top:155px;width:487px;height:19px;background:#ebebeb"></div><div class="a" style="left:440px;top:174px;width:487px;height:1px;background:#d2d2d2"></div><svg class="a" style="left:442px;top:157px" width="16" height="17" viewBox="0 0 16 17"><path d="M0.5,14.6 L0.5,2.5 L2.5,0.5 L12.5,0.5 L15.5,3.5 L15.5,14.5 L13.5,15.6 L10.6,12.3 L9.2,13.5 L8.3,12.7 L6.4,13.7 L5.4,12.3 L3.7,14.4 L2.6,12.9 L1,14.6 Z" fill="url(#gb)" stroke="#6a9ed6"/><path d="M12.5,0.5 L15.5,3.5 L15.5,4.5 L12.5,4.5 Z" fill="#cfe4fa"/><path d="M12.5,0.5 L12.5,4.5 L15.5,4.5" fill="none" stroke="#6a9ed6"/><g fill="#0a2450"><rect x="2" y="7" width="1" height="1"/><rect x="3" y="6" width="2" height="5"/><rect x="6" y="6" width="3" height="1"/><rect x="8" y="6" width="1.6" height="3"/><rect x="6" y="8" width="3" height="1"/><rect x="6" y="8" width="1.6" height="3"/><rect x="6" y="10" width="3.6" height="1"/><rect x="10" y="6" width="3" height="1"/><rect x="11.4" y="6" width="1.6" height="5"/><rect x="10.5" y="8" width="2.5" height="1"/><rect x="10" y="10" width="3" height="1"/></g></svg><div class="t" style="left:462px;top:157px;font-size:12px;line-height:16px;color:#000;transform:scaleX(0.8645);">Maximum number of bars for patterns search</div><div class="t" style="left:685px;top:157px;font-size:12px;line-height:16px;color:#000;transform:scaleX(0.9236);">500</div><div class="a" style="left:440px;top:194px;width:487px;height:1px;background:#d2d2d2"></div><svg class="a" style="left:442px;top:177px" width="16" height="17" viewBox="0 0 16 17"><path d="M0.5,14.6 L0.5,2.5 L2.5,0.5 L12.5,0.5 L15.5,3.5 L15.5,14.5 L13.5,15.6 L10.6,12.3 L9.2,13.5 L8.3,12.7 L6.4,13.7 L5.4,12.3 L3.7,14.4 L2.6,12.9 L1,14.6 Z" fill="url(#gg)" stroke="#4cb84c"/><path d="M12.5,0.5 L15.5,3.5 L15.5,4.5 L12.5,4.5 Z" fill="#a8eca8"/><path d="M12.5,0.5 L12.5,4.5 L15.5,4.5" fill="none" stroke="#4cb84c"/><path d="M2.4,9.4 L7.8,5.3" stroke="#007800" stroke-width="1.7" stroke-linecap="round"/><path d="M9.6,8.6 Q9.9,9.4 10.6,9.4 L12.8,9.4" stroke="#007800" stroke-width="1.6" fill="none" stroke-linecap="round"/></svg><div class="t" style="left:462px;top:177px;font-size:12px;line-height:16px;color:#000;transform:scaleX(0.8602);">Display Swings</div><div class="t" style="left:685px;top:177px;font-size:12px;line-height:16px;color:#000;transform:scaleX(0.8675);">false</div><div class="a" style="left:440px;top:195px;width:487px;height:19px;background:#ebebeb"></div><div class="a" style="left:440px;top:214px;width:487px;height:1px;background:#d2d2d2"></div><svg class="a" style="left:442px;top:197px" width="16" height="17" viewBox="0 0 16 17"><path d="M0.5,14.6 L0.5,2.5 L2.5,0.5 L12.5,0.5 L15.5,3.5 L15.5,14.5 L13.5,15.6 L10.6,12.3 L9.2,13.5 L8.3,12.7 L6.4,13.7 L5.4,12.3 L3.7,14.4 L2.6,12.9 L1,14.6 Z" fill="url(#gb)" stroke="#6a9ed6"/><path d="M12.5,0.5 L15.5,3.5 L15.5,4.5 L12.5,4.5 Z" fill="#cfe4fa"/><path d="M12.5,0.5 L12.5,4.5 L15.5,4.5" fill="none" stroke="#6a9ed6"/><g fill="#0a2450"><rect x="2" y="7" width="1" height="1"/><rect x="3" y="6" width="2" height="5"/><rect x="6" y="6" width="3" height="1"/><rect x="8" y="6" width="1.6" height="3"/><rect x="6" y="8" width="3" height="1"/><rect x="6" y="8" width="1.6" height="3"/><rect x="6" y="10" width="3.6" height="1"/><rect x="10" y="6" width="3" height="1"/><rect x="11.4" y="6" width="1.6" height="5"/><rect x="10.5" y="8" width="2.5" height="1"/><rect x="10" y="10" width="3" height="1"/></g></svg><div class="t" style="left:462px;top:197px;font-size:12px;line-height:16px;color:#000;transform:scaleX(0.8741);">Depth</div><div class="t" style="left:685px;top:197px;font-size:12px;line-height:16px;color:#000;transform:scaleX(0.8982);">10</div><div class="a" style="left:440px;top:234px;width:487px;height:1px;background:#d2d2d2"></div><svg class="a" style="left:442px;top:217px" width="16" height="17" viewBox="0 0 16 17"><path d="M0.5,14.6 L0.5,2.5 L2.5,0.5 L12.5,0.5 L15.5,3.5 L15.5,14.5 L13.5,15.6 L10.6,12.3 L9.2,13.5 L8.3,12.7 L6.4,13.7 L5.4,12.3 L3.7,14.4 L2.6,12.9 L1,14.6 Z" fill="url(#gb)" stroke="#6a9ed6"/><path d="M12.5,0.5 L15.5,3.5 L15.5,4.5 L12.5,4.5 Z" fill="#cfe4fa"/><path d="M12.5,0.5 L12.5,4.5 L15.5,4.5" fill="none" stroke="#6a9ed6"/><g fill="#0a2450"><rect x="2" y="7" width="1" height="1"/><rect x="3" y="6" width="2" height="5"/><rect x="6" y="6" width="3" height="1"/><rect x="8" y="6" width="1.6" height="3"/><rect x="6" y="8" width="3" height="1"/><rect x="6" y="8" width="1.6" height="3"/><rect x="6" y="10" width="3.6" height="1"/><rect x="10" y="6" width="3" height="1"/><rect x="11.4" y="6" width="1.6" height="5"/><rect x="10.5" y="8" width="2.5" height="1"/><rect x="10" y="10" width="3" height="1"/></g></svg><div class="t" style="left:462px;top:217px;font-size:12px;line-height:16px;color:#000;transform:scaleX(0.8795);">Deviation</div><div class="t" style="left:685px;top:217px;font-size:12px;line-height:16px;color:#000;transform:scaleX(0.8972);">5</div><div class="a" style="left:440px;top:235px;width:487px;height:19px;background:#ebebeb"></div><div class="a" style="left:440px;top:254px;width:487px;height:1px;background:#d2d2d2"></div><svg class="a" style="left:442px;top:237px" width="16" height="17" viewBox="0 0 16 17"><path d="M0.5,14.6 L0.5,2.5 L2.5,0.5 L12.5,0.5 L15.5,3.5 L15.5,14.5 L13.5,15.6 L10.6,12.3 L9.2,13.5 L8.3,12.7 L6.4,13.7 L5.4,12.3 L3.7,14.4 L2.6,12.9 L1,14.6 Z" fill="url(#gb)" stroke="#6a9ed6"/><path d="M12.5,0.5 L15.5,3.5 L15.5,4.5 L12.5,4.5 Z" fill="#cfe4fa"/><path d="M12.5,0.5 L12.5,4.5 L15.5,4.5" fill="none" stroke="#6a9ed6"/><g fill="#0a2450"><rect x="2" y="7" width="1" height="1"/><rect x="3" y="6" width="2" height="5"/><rect x="6" y="6" width="3" height="1"/><rect x="8" y="6" width="1.6" height="3"/><rect x="6" y="8" width="3" height="1"/><rect x="6" y="8" width="1.6" height="3"/><rect x="6" y="10" width="3.6" height="1"/><rect x="10" y="6" width="3" height="1"/><rect x="11.4" y="6" width="1.6" height="5"/><rect x="10.5" y="8" width="2.5" height="1"/><rect x="10" y="10" width="3" height="1"/></g></svg><div class="t" style="left:462px;top:237px;font-size:12px;line-height:16px;color:#000;transform:scaleX(0.8914);">Backstep</div><div class="t" style="left:685px;top:237px;font-size:12px;line-height:16px;color:#000;transform:scaleX(0.8972);">5</div><div class="a" style="left:440px;top:274px;width:487px;height:1px;background:#d2d2d2"></div><svg class="a" style="left:442px;top:257px" width="16" height="17" viewBox="0 0 16 17"><path d="M0.5,14.6 L0.5,2.5 L2.5,0.5 L12.5,0.5 L15.5,3.5 L15.5,14.5 L13.5,15.6 L10.6,12.3 L9.2,13.5 L8.3,12.7 L6.4,13.7 L5.4,12.3 L3.7,14.4 L2.6,12.9 L1,14.6 Z" fill="url(#gy)" stroke="#cdb957"/><path d="M12.5,0.5 L15.5,3.5 L15.5,4.5 L12.5,4.5 Z" fill="#f4eab8"/><path d="M12.5,0.5 L12.5,4.5 L15.5,4.5" fill="none" stroke="#cdb957"/><text x="2" y="11" font-family="Liberation Sans" font-size="10" fill="#3a3406" textLength="9.2" lengthAdjust="spacingAndGlyphs" stroke="#3a3406" stroke-width="0.25">ab</text></svg><div class="t" style="left:462px;top:257px;font-size:12px;line-height:16px;color:#000;transform:scaleX(0.8690);">Display_</div><div class="t" style="left:685px;top:257px;font-size:12px;line-height:16px;color:#000;transform:scaleX(0.8670);">&gt;=== Display Settings ===&lt;</div><div class="a" style="left:440px;top:275px;width:487px;height:19px;background:#ebebeb"></div><div class="a" style="left:440px;top:294px;width:487px;height:1px;background:#d2d2d2"></div><svg class="a" style="left:442px;top:277px" width="16" height="17" viewBox="0 0 16 17"><path d="M0.5,14.6 L0.5,2.5 L2.5,0.5 L12.5,0.5 L15.5,3.5 L15.5,14.5 L13.5,15.6 L10.6,12.3 L9.2,13.5 L8.3,12.7 L6.4,13.7 L5.4,12.3 L3.7,14.4 L2.6,12.9 L1,14.6 Z" fill="#f6f6f6" stroke="#6e6e6e"/><path d="M12.5,0.5 L15.5,3.5 L15.5,4.5 L12.5,4.5 Z" fill="#fff"/><path d="M12.5,0.5 L12.5,4.5 L15.5,4.5" fill="none" stroke="#6e6e6e"/><rect x="2" y="6" width="11" height="5" fill="url(#gc)"/></svg><div class="t" style="left:462px;top:277px;font-size:12px;line-height:16px;color:#000;transform:scaleX(0.8613);">Bull Pattern Color</div><div class="a" style="left:686px;top:278px;width:13px;height:13px;background:#90ee90;border:1px solid #8f8f8f"></div><div class="t" style="left:702px;top:277px;font-size:12px;line-height:16px;color:#000;transform:scaleX(0.8589);">LightGreen</div><div class="a" style="left:440px;top:314px;width:487px;height:1px;background:#d2d2d2"></div><svg class="a" style="left:442px;top:297px" width="16" height="17" viewBox="0 0 16 17"><path d="M0.5,14.6 L0.5,2.5 L2.5,0.5 L12.5,0.5 L15.5,3.5 L15.5,14.5 L13.5,15.6 L10.6,12.3 L9.2,13.5 L8.3,12.7 L6.4,13.7 L5.4,12.3 L3.7,14.4 L2.6,12.9 L1,14.6 Z" fill="#f6f6f6" stroke="#6e6e6e"/><path d="M12.5,0.5 L15.5,3.5 L15.5,4.5 L12.5,4.5 Z" fill="#fff"/><path d="M12.5,0.5 L12.5,4.5 L15.5,4.5" fill="none" stroke="#6e6e6e"/><rect x="2" y="6" width="11" height="5" fill="url(#gc)"/></svg><div class="t" style="left:462px;top:297px;font-size:12px;line-height:16px;color:#000;transform:scaleX(0.8628);">BearPatternColor</div><div class="a" style="left:686px;top:298px;width:13px;height:13px;background:#f08080;border:1px solid #8f8f8f"></div><div class="t" style="left:702px;top:297px;font-size:12px;line-height:16px;color:#000;transform:scaleX(0.8409);">LightCoral</div><div class="a" style="left:440px;top:315px;width:487px;height:19px;background:#ebebeb"></div><div class="a" style="left:440px;top:334px;width:487px;height:1px;background:#d2d2d2"></div><svg class="a" style="left:442px;top:317px" width="16" height="17" viewBox="0 0 16 17"><path d="M0.5,14.6 L0.5,2.5 L2.5,0.5 L12.5,0.5 L15.5,3.5 L15.5,14.5 L13.5,15.6 L10.6,12.3 L9.2,13.5 L8.3,12.7 L6.4,13.7 L5.4,12.3 L3.7,14.4 L2.6,12.9 L1,14.6 Z" fill="#f6f6f6" stroke="#6e6e6e"/><path d="M12.5,0.5 L15.5,3.5 L15.5,4.5 L12.5,4.5 Z" fill="#fff"/><path d="M12.5,0.5 L12.5,4.5 L15.5,4.5" fill="none" stroke="#6e6e6e"/><rect x="2" y="6" width="11" height="5" fill="url(#gc)"/></svg><div class="t" style="left:462px;top:317px;font-size:12px;line-height:16px;color:#000;transform:scaleX(0.8471);">Forming Pattern Color</div><div class="a" style="left:686px;top:318px;width:13px;height:13px;background:#ffd700;border:1px solid #8f8f8f"></div><div class="t" style="left:702px;top:317px;font-size:12px;line-height:16px;color:#000;transform:scaleX(0.8281);">Gold</div><div class="a" style="left:440px;top:354px;width:487px;height:1px;background:#d2d2d2"></div><svg class="a" style="left:442px;top:337px" width="16" height="17" viewBox="0 0 16 17"><path d="M0.5,14.6 L0.5,2.5 L2.5,0.5 L12.5,0.5 L15.5,3.5 L15.5,14.5 L13.5,15.6 L10.6,12.3 L9.2,13.5 L8.3,12.7 L6.4,13.7 L5.4,12.3 L3.7,14.4 L2.6,12.9 L1,14.6 Z" fill="url(#gb)" stroke="#6a9ed6"/><path d="M12.5,0.5 L15.5,3.5 L15.5,4.5 L12.5,4.5 Z" fill="#cfe4fa"/><path d="M12.5,0.5 L12.5,4.5 L15.5,4.5" fill="none" stroke="#6a9ed6"/><g fill="#0a2450"><rect x="2" y="7" width="1" height="1"/><rect x="3" y="6" width="2" height="5"/><rect x="6" y="6" width="3" height="1"/><rect x="8" y="6" width="1.6" height="3"/><rect x="6" y="8" width="3" height="1"/><rect x="6" y="8" width="1.6" height="3"/><rect x="6" y="10" width="3.6" height="1"/><rect x="10" y="6" width="3" height="1"/><rect x="11.4" y="6" width="1.6" height="5"/><rect x="10.5" y="8" width="2.5" height="1"/><rect x="10" y="10" width="3" height="1"/></g></svg><div class="t" style="left:462px;top:337px;font-size:12px;line-height:16px;color:#000;transform:scaleX(0.8813);">Pattern Line Width</div><div class="t" style="left:685px;top:337px;font-size:12px;line-height:16px;color:#000;transform:scaleX(0.8972);">3</div><div class="a" style="left:440px;top:355px;width:487px;height:19px;background:#ebebeb"></div><div class="a" style="left:440px;top:374px;width:487px;height:1px;background:#d2d2d2"></div><svg class="a" style="left:442px;top:357px" width="16" height="17" viewBox="0 0 16 17"><path d="M0.5,14.6 L0.5,2.5 L2.5,0.5 L12.5,0.5 L15.5,3.5 L15.5,14.5 L13.5,15.6 L10.6,12.3 L9.2,13.5 L8.3,12.7 L6.4,13.7 L5.4,12.3 L3.7,14.4 L2.6,12.9 L1,14.6 Z" fill="url(#gb)" stroke="#6a9ed6"/><path d="M12.5,0.5 L15.5,3.5 L15.5,4.5 L12.5,4.5 Z" fill="#cfe4fa"/><path d="M12.5,0.5 L12.5,4.5 L15.5,4.5" fill="none" stroke="#6a9ed6"/><g fill="#0a2450"><rect x="2" y="7" width="1" height="1"/><rect x="3" y="6" width="2" height="5"/><rect x="6" y="6" width="3" height="1"/><rect x="8" y="6" width="1.6" height="3"/><rect x="6" y="8" width="3" height="1"/><rect x="6" y="8" width="1.6" height="3"/><rect x="6" y="10" width="3.6" height="1"/><rect x="10" y="6" width="3" height="1"/><rect x="11.4" y="6" width="1.6" height="5"/><rect x="10.5" y="8" width="2.5" height="1"/><rect x="10" y="10" width="3" height="1"/></g></svg><div class="t" style="left:462px;top:357px;font-size:12px;line-height:16px;color:#000;transform:scaleX(0.8695);">Forming Pattern Line Width</div><div class="t" style="left:685px;top:357px;font-size:12px;line-height:16px;color:#000;transform:scaleX(0.7477);">1</div><div class="a" style="left:440px;top:394px;width:487px;height:1px;background:#d2d2d2"></div><svg class="a" style="left:442px;top:377px" width="16" height="17" viewBox="0 0 16 17"><path d="M0.5,14.6 L0.5,2.5 L2.5,0.5 L12.5,0.5 L15.5,3.5 L15.5,14.5 L13.5,15.6 L10.6,12.3 L9.2,13.5 L8.3,12.7 L6.4,13.7 L5.4,12.3 L3.7,14.4 L2.6,12.9 L1,14.6 Z" fill="url(#gb)" stroke="#6a9ed6"/><path d="M12.5,0.5 L15.5,3.5 L15.5,4.5 L12.5,4.5 Z" fill="#cfe4fa"/><path d="M12.5,0.5 L12.5,4.5 L15.5,4.5" fill="none" stroke="#6a9ed6"/><g fill="#0a2450"><rect x="2" y="7" width="1" height="1"/><rect x="3" y="6" width="2" height="5"/><rect x="6" y="6" width="3" height="1"/><rect x="8" y="6" width="1.6" height="3"/><rect x="6" y="8" width="3" height="1"/><rect x="6" y="8" width="1.6" height="3"/><rect x="6" y="10" width="3.6" height="1"/><rect x="10" y="6" width="3" height="1"/><rect x="11.4" y="6" width="1.6" height="5"/><rect x="10.5" y="8" width="2.5" height="1"/><rect x="10" y="10" width="3" height="1"/></g></svg><div class="t" style="left:462px;top:377px;font-size:12px;line-height:16px;color:#000;transform:scaleX(0.8538);">Line Style</div><div class="t" style="left:685px;top:377px;font-size:12px;line-height:16px;color:#000;transform:scaleX(0.8244);">Solid</div><div class="a" style="left:440px;top:395px;width:487px;height:19px;background:#ebebeb"></div><div class="a" style="left:440px;top:414px;width:487px;height:1px;background:#d2d2d2"></div><svg class="a" style="left:442px;top:397px" width="16" height="17" viewBox="0 0 16 17"><path d="M0.5,14.6 L0.5,2.5 L2.5,0.5 L12.5,0.5 L15.5,3.5 L15.5,14.5 L13.5,15.6 L10.6,12.3 L9.2,13.5 L8.3,12.7 L6.4,13.7 L5.4,12.3 L3.7,14.4 L2.6,12.9 L1,14.6 Z" fill="url(#gb)" stroke="#6a9ed6"/><path d="M12.5,0.5 L15.5,3.5 L15.5,4.5 L12.5,4.5 Z" fill="#cfe4fa"/><path d="M12.5,0.5 L12.5,4.5 L15.5,4.5" fill="none" stroke="#6a9ed6"/><g fill="#0a2450"><rect x="2" y="7" width="1" height="1"/><rect x="3" y="6" width="2" height="5"/><rect x="6" y="6" width="3" height="1"/><rect x="8" y="6" width="1.6" height="3"/><rect x="6" y="8" width="3" height="1"/><rect x="6" y="8" width="1.6" height="3"/><rect x="6" y="10" width="3.6" height="1"/><rect x="10" y="6" width="3" height="1"/><rect x="11.4" y="6" width="1.6" height="5"/><rect x="10.5" y="8" width="2.5" height="1"/><rect x="10" y="10" width="3" height="1"/></g></svg><div class="t" style="left:462px;top:397px;font-size:12px;line-height:16px;color:#000;transform:scaleX(0.8603);">LabelFontSize</div><div class="t" style="left:685px;top:397px;font-size:12px;line-height:16px;color:#000;transform:scaleX(0.8982);">10</div><div class="a" style="left:440px;top:434px;width:487px;height:1px;background:#d2d2d2"></div><svg class="a" style="left:442px;top:417px" width="16" height="17" viewBox="0 0 16 17"><path d="M0.5,14.6 L0.5,2.5 L2.5,0.5 L12.5,0.5 L15.5,3.5 L15.5,14.5 L13.5,15.6 L10.6,12.3 L9.2,13.5 L8.3,12.7 L6.4,13.7 L5.4,12.3 L3.7,14.4 L2.6,12.9 L1,14.6 Z" fill="#f6f6f6" stroke="#6e6e6e"/><path d="M12.5,0.5 L15.5,3.5 L15.5,4.5 L12.5,4.5 Z" fill="#fff"/><path d="M12.5,0.5 L12.5,4.5 L15.5,4.5" fill="none" stroke="#6e6e6e"/><rect x="2" y="6" width="11" height="5" fill="url(#gc)"/></svg><div class="t" style="left:462px;top:417px;font-size:12px;line-height:16px;color:#000;transform:scaleX(0.8614);">LabelColor</div><div class="a" style="left:686px;top:418px;width:13px;height:13px;background:#008000;border:1px solid #8f8f8f"></div><div class="t" style="left:702px;top:417px;font-size:12px;line-height:16px;color:#000;transform:scaleX(0.8393);">Green</div><div class="a" style="left:440px;top:435px;width:487px;height:19px;background:#ebebeb"></div><div class="a" style="left:440px;top:454px;width:487px;height:1px;background:#d2d2d2"></div><svg class="a" style="left:442px;top:437px" width="16" height="17" viewBox="0 0 16 17"><path d="M0.5,14.6 L0.5,2.5 L2.5,0.5 L12.5,0.5 L15.5,3.5 L15.5,14.5 L13.5,15.6 L10.6,12.3 L9.2,13.5 L8.3,12.7 L6.4,13.7 L5.4,12.3 L3.7,14.4 L2.6,12.9 L1,14.6 Z" fill="url(#gy)" stroke="#cdb957"/><path d="M12.5,0.5 L15.5,3.5 L15.5,4.5 L12.5,4.5 Z" fill="#f4eab8"/><path d="M12.5,0.5 L12.5,4.5 L15.5,4.5" fill="none" stroke="#cdb957"/><text x="2" y="11" font-family="Liberation Sans" font-size="10" fill="#3a3406" textLength="9.2" lengthAdjust="spacingAndGlyphs" stroke="#3a3406" stroke-width="0.25">ab</text></svg><div class="t" style="left:462px;top:437px;font-size:12px;line-height:16px;color:#000;transform:scaleX(0.8291);">Alert_</div><div class="t" style="left:685px;top:437px;font-size:12px;line-height:16px;color:#000;transform:scaleX(0.8693);">&gt;=== Alert Settings ===&lt;</div><div class="a" style="left:440px;top:474px;width:487px;height:1px;background:#d2d2d2"></div><svg class="a" style="left:442px;top:457px" width="16" height="17" viewBox="0 0 16 17"><path d="M0.5,14.6 L0.5,2.5 L2.5,0.5 L12.5,0.5 L15.5,3.5 L15.5,14.5 L13.5,15.6 L10.6,12.3 L9.2,13.5 L8.3,12.7 L6.4,13.7 L5.4,12.3 L3.7,14.4 L2.6,12.9 L1,14.6 Z" fill="url(#gy)" stroke="#cdb957"/><path d="M12.5,0.5 L15.5,3.5 L15.5,4.5 L12.5,4.5 Z" fill="#f4eab8"/><path d="M12.5,0.5 L12.5,4.5 L15.5,4.5" fill="none" stroke="#cdb957"/><text x="2" y="11" font-family="Liberation Sans" font-size="10" fill="#3a3406" textLength="9.2" lengthAdjust="spacingAndGlyphs" stroke="#3a3406" stroke-width="0.25">ab</text></svg><div class="t" style="left:462px;top:457px;font-size:12px;line-height:16px;color:#000;transform:scaleX(0.8528);">AlertTitle</div><div class="t" style="left:685px;top:457px;font-size:12px;line-height:16px;color:#000;transform:scaleX(0.8705);">PricePattern-Signal</div><div class="a" style="left:440px;top:475px;width:487px;height:19px;background:#ebebeb"></div><div class="a" style="left:440px;top:494px;width:487px;height:1px;background:#d2d2d2"></div><svg class="a" style="left:442px;top:477px" width="16" height="17" viewBox="0 0 16 17"><path d="M0.5,14.6 L0.5,2.5 L2.5,0.5 L12.5,0.5 L15.5,3.5 L15.5,14.5 L13.5,15.6 L10.6,12.3 L9.2,13.5 L8.3,12.7 L6.4,13.7 L5.4,12.3 L3.7,14.4 L2.6,12.9 L1,14.6 Z" fill="url(#gg)" stroke="#4cb84c"/><path d="M12.5,0.5 L15.5,3.5 L15.5,4.5 L12.5,4.5 Z" fill="#a8eca8"/><path d="M12.5,0.5 L12.5,4.5 L15.5,4.5" fill="none" stroke="#4cb84c"/><path d="M2.4,9.4 L7.8,5.3" stroke="#007800" stroke-width="1.7" stroke-linecap="round"/><path d="M9.6,8.6 Q9.9,9.4 10.6,9.4 L12.8,9.4" stroke="#007800" stroke-width="1.6" fill="none" stroke-linecap="round"/></svg><div class="t" style="left:462px;top:477px;font-size:12px;line-height:16px;color:#000;transform:scaleX(0.8566);">PopupAlerts</div><div class="t" style="left:685px;top:477px;font-size:12px;line-height:16px;color:#000;transform:scaleX(0.8675);">false</div><div class="a" style="left:440px;top:514px;width:487px;height:1px;background:#d2d2d2"></div><svg class="a" style="left:442px;top:497px" width="16" height="17" viewBox="0 0 16 17"><path d="M0.5,14.6 L0.5,2.5 L2.5,0.5 L12.5,0.5 L15.5,3.5 L15.5,14.5 L13.5,15.6 L10.6,12.3 L9.2,13.5 L8.3,12.7 L6.4,13.7 L5.4,12.3 L3.7,14.4 L2.6,12.9 L1,14.6 Z" fill="url(#gg)" stroke="#4cb84c"/><path d="M12.5,0.5 L15.5,3.5 L15.5,4.5 L12.5,4.5 Z" fill="#a8eca8"/><path d="M12.5,0.5 L12.5,4.5 L15.5,4.5" fill="none" stroke="#4cb84c"/><path d="M2.4,9.4 L7.8,5.3" stroke="#007800" stroke-width="1.7" stroke-linecap="round"/><path d="M9.6,8.6 Q9.9,9.4 10.6,9.4 L12.8,9.4" stroke="#007800" stroke-width="1.6" fill="none" stroke-linecap="round"/></svg><div class="t" style="left:462px;top:497px;font-size:12px;line-height:16px;color:#000;transform:scaleX(0.8239);">EmailAlerts</div><div class="t" style="left:685px;top:497px;font-size:12px;line-height:16px;color:#000;transform:scaleX(0.8675);">false</div><div class="a" style="left:440px;top:515px;width:487px;height:19px;background:#ebebeb"></div><div class="a" style="left:440px;top:534px;width:487px;height:1px;background:#d2d2d2"></div><svg class="a" style="left:442px;top:517px" width="16" height="17" viewBox="0 0 16 17"><path d="M0.5,14.6 L0.5,2.5 L2.5,0.5 L12.5,0.5 L15.5,3.5 L15.5,14.5 L13.5,15.6 L10.6,12.3 L9.2,13.5 L8.3,12.7 L6.4,13.7 L5.4,12.3 L3.7,14.4 L2.6,12.9 L1,14.6 Z" fill="url(#gg)" stroke="#4cb84c"/><path d="M12.5,0.5 L15.5,3.5 L15.5,4.5 L12.5,4.5 Z" fill="#a8eca8"/><path d="M12.5,0.5 L12.5,4.5 L15.5,4.5" fill="none" stroke="#4cb84c"/><path d="M2.4,9.4 L7.8,5.3" stroke="#007800" stroke-width="1.7" stroke-linecap="round"/><path d="M9.6,8.6 Q9.9,9.4 10.6,9.4 L12.8,9.4" stroke="#007800" stroke-width="1.6" fill="none" stroke-linecap="round"/></svg><div class="t" style="left:462px;top:517px;font-size:12px;line-height:16px;color:#000;transform:scaleX(0.8444);">PushAlerts</div><div class="t" style="left:685px;top:517px;font-size:12px;line-height:16px;color:#000;transform:scaleX(0.8675);">false</div><div class="a" style="left:440px;top:554px;width:487px;height:1px;background:#d2d2d2"></div><svg class="a" style="left:442px;top:537px" width="16" height="17" viewBox="0 0 16 17"><path d="M0.5,14.6 L0.5,2.5 L2.5,0.5 L12.5,0.5 L15.5,3.5 L15.5,14.5 L13.5,15.6 L10.6,12.3 L9.2,13.5 L8.3,12.7 L6.4,13.7 L5.4,12.3 L3.7,14.4 L2.6,12.9 L1,14.6 Z" fill="url(#gg)" stroke="#4cb84c"/><path d="M12.5,0.5 L15.5,3.5 L15.5,4.5 L12.5,4.5 Z" fill="#a8eca8"/><path d="M12.5,0.5 L12.5,4.5 L15.5,4.5" fill="none" stroke="#4cb84c"/><path d="M2.4,9.4 L7.8,5.3" stroke="#007800" stroke-width="1.7" stroke-linecap="round"/><path d="M9.6,8.6 Q9.9,9.4 10.6,9.4 L12.8,9.4" stroke="#007800" stroke-width="1.6" fill="none" stroke-linecap="round"/></svg><div class="t" style="left:462px;top:537px;font-size:12px;line-height:16px;color:#000;transform:scaleX(0.8566);">SoundAlerts</div><div class="t" style="left:685px;top:537px;font-size:12px;line-height:16px;color:#000;transform:scaleX(0.8675);">false</div><div class="a" style="left:440px;top:555px;width:487px;height:19px;background:#ebebeb"></div><div class="a" style="left:440px;top:574px;width:487px;height:1px;background:#d2d2d2"></div><svg class="a" style="left:442px;top:557px" width="16" height="17" viewBox="0 0 16 17"><path d="M0.5,14.6 L0.5,2.5 L2.5,0.5 L12.5,0.5 L15.5,3.5 L15.5,14.5 L13.5,15.6 L10.6,12.3 L9.2,13.5 L8.3,12.7 L6.4,13.7 L5.4,12.3 L3.7,14.4 L2.6,12.9 L1,14.6 Z" fill="url(#gy)" stroke="#cdb957"/><path d="M12.5,0.5 L15.5,3.5 L15.5,4.5 L12.5,4.5 Z" fill="#f4eab8"/><path d="M12.5,0.5 L12.5,4.5 L15.5,4.5" fill="none" stroke="#cdb957"/><text x="2" y="11" font-family="Liberation Sans" font-size="10" fill="#3a3406" textLength="9.2" lengthAdjust="spacingAndGlyphs" stroke="#3a3406" stroke-width="0.25">ab</text></svg><div class="t" style="left:462px;top:557px;font-size:12px;line-height:16px;color:#000;transform:scaleX(0.8511);">SoundFile</div><div class="t" style="left:685px;top:557px;font-size:12px;line-height:16px;color:#000;transform:scaleX(0.8953);">alert.wav</div>
<div class="a" style="left:682px;top:95px;width:1px;height:480px;background:#c9c9c9"></div>
<div class="a" style="left:927px;top:71px;width:16px;height:523px;background:#f0f0f0"></div>
<div class="a" style="left:927px;top:322px;width:15px;height:255px;background:#c2c2c2"></div>
<svg class="a" style="left:927px;top:70px" width="17" height="525" viewBox="0 0 17 525">
<path d="M4.3,12.3 L8,8.6 L11.7,12.3" stroke="#606060" stroke-width="2.2" fill="none"/>
<path d="M4.3,514 L8,517.7 L11.7,514" stroke="#606060" stroke-width="2.2" fill="none"/>
</svg>
<div class="a" style="left:953px;top:540px;width:103px;height:21px;background:#e1e1e1;border:1px solid #adadad"></div><div class="t" style="left:992px;top:543px;font-size:12px;line-height:16px;color:#000;transform:scaleX(0.8613);">Load</div>
<div class="a" style="left:953px;top:573px;width:103px;height:21px;background:#e1e1e1;border:1px solid #adadad"></div><div class="t" style="left:992px;top:576px;font-size:12px;line-height:16px;color:#000;transform:scaleX(0.8772);">Save</div>
<div class="a" style="left:829px;top:611px;width:73px;height:21px;background:#e1e1e1;border:1px solid #adadad"></div><div class="t" style="left:857px;top:614px;font-size:12px;line-height:16px;color:#000;transform:scaleX(0.8937);">OK</div>
<div class="a" style="left:910px;top:611px;width:73px;height:21px;background:#e1e1e1;border:1px solid #adadad"></div><div class="t" style="left:929px;top:614px;font-size:12px;line-height:16px;color:#000;transform:scaleX(0.8833);">Cancel</div>
<div class="a" style="left:991px;top:611px;width:73px;height:21px;background:#e1e1e1;border:1px solid #adadad"></div><div class="t" style="left:1013px;top:614px;font-size:12px;line-height:16px;color:#000;transform:scaleX(0.8482);">Reset</div>
<svg class="a" style="left:1062px;top:630px" width="10" height="10" viewBox="0 0 10 10">
<rect x="7" y="1" width="2" height="2" fill="#a0a0a0"/><rect x="4" y="4" width="2" height="2" fill="#a0a0a0"/><rect x="7" y="4" width="2" height="2" fill="#a0a0a0"/>
<rect x="1" y="7" width="2" height="2" fill="#a0a0a0"/><rect x="4" y="7" width="2" height="2" fill="#a0a0a0"/><rect x="7" y="7" width="2" height="2" fill="#a0a0a0"/>
</svg>

</body></html>
